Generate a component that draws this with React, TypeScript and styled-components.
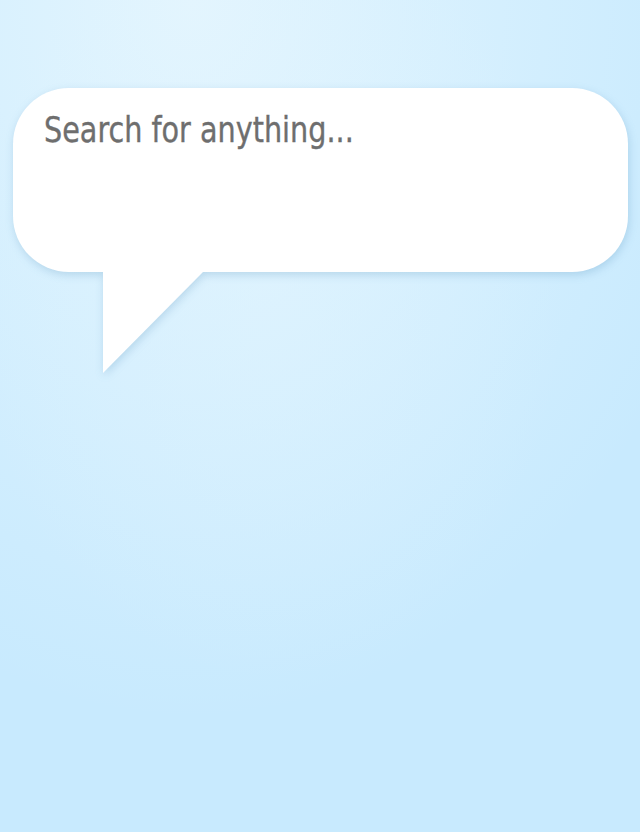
import React from "react";
import styled, { createGlobalStyle } from "styled-components";

const GlobalStyle = createGlobalStyle`
  html, body {
    margin: 0;
    padding: 0;
    height: 100%;
  }
  body {
    background-color: #c8eafe;
    background-image:
      radial-gradient(ellipse 300px 400px at 42% 34%, rgba(228, 245, 255, 0.4) 0%, rgba(228, 245, 255, 0) 100%),
      radial-gradient(ellipse 560px 720px at 30% 0%, #e3f5fe 0%, rgba(227, 245, 254, 0) 100%);
    background-repeat: no-repeat;
    min-height: 832px;
  }
  #root {
    min-height: 832px;
  }
`;

const Page = styled.main`
  display: flex;
  flex-direction: column;
  padding: 88px 12px 0 13px;
  min-height: 832px;
  box-sizing: border-box;
`;

const BubbleWrap = styled.div`
  position: relative;
  filter: drop-shadow(1px 3px 4px rgba(40, 110, 160, 0.2));
`;

const Bubble = styled.div`
  position: relative;
  height: 184px;
  box-sizing: border-box;
  background: #ffffff;
  border-radius: 56px;
  padding: 20px 31px 0 31px;

  &::after {
    content: "";
    position: absolute;
    left: 90px;
    top: 183px;
    width: 101px;
    height: 102px;
    background: #ffffff;
    clip-path: polygon(0 0, 100% 0, 0 100%);
  }
`;

const SearchText = styled.div`
  font-family: "DejaVu Sans Condensed", "Liberation Sans", sans-serif;
  font-size: 36px;
  line-height: 44px;
  color: #6e6e6e;
  -webkit-text-stroke: 0.35px #6e6e6e;
  white-space: nowrap;
  transform: scaleX(0.885);
  transform-origin: left center;
`;

export default function App() {
  return (
    <>
      <GlobalStyle />
      <Page>
        <BubbleWrap>
          <Bubble>
            <SearchText>Search for anything...</SearchText>
          </Bubble>
        </BubbleWrap>
      </Page>
    </>
  );
}
